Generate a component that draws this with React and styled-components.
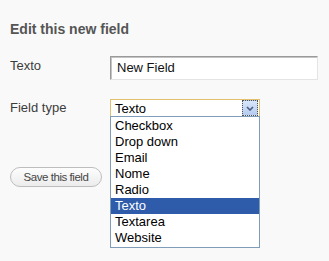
import React from "react";
import styled, { createGlobalStyle } from "styled-components";

const GlobalStyle = createGlobalStyle`
  body {
    margin: 0;
    background: #f9f9f9;
    font-family: "Liberation Sans", Arial, sans-serif;
  }
`;

const Panel = styled.div`
  padding: 21px 10px 0 10px;
  min-height: 240px;
`;

const Heading = styled.h3`
  margin: 0 0 19px 0;
  font-size: 14px;
  line-height: 16px;
  font-weight: 700;
  color: #555;
`;

const Row = styled.div`
  display: flex;
  align-items: flex-start;
  margin-bottom: 19px;
`;

const Label = styled.label`
  width: 100px;
  flex-shrink: 0;
  padding-top: ${(p) => p.$pad || 0}px;
  font-size: 13px;
  line-height: 14px;
  color: #3c3c3c;
`;

const TextInput = styled.div`
  box-sizing: border-box;
  width: 208px;
  height: 24px;
  padding: 0 6px;
  background: #fff;
  border: 1px solid;
  border-color: #9a9a9a #e4e4e4 #e4e4e4 #9a9a9a;
  box-shadow: inset 1px 1px 0 #c4c4c4;
  font-size: 13px;
  line-height: 22px;
  color: #111;
`;

const SelectWrap = styled.div`
  position: relative;
  width: 150px;
`;

const SelectBox = styled.div`
  box-sizing: border-box;
  display: flex;
  align-items: center;
  justify-content: space-between;
  height: 18px;
  padding: 0 1px 0 4px;
  background: #fff;
  border: 1px solid #e2c06c;
  font-size: 13px;
  color: #000;
`;

const ArrowButton = styled.span`
  box-sizing: border-box;
  display: flex;
  align-items: center;
  justify-content: center;
  width: 16px;
  height: 16px;
  background: linear-gradient(#d9e6fa, #b4cbf0);
  border: 1px dotted #555;
`;

const OptionList = styled.ul`
  position: absolute;
  top: 17px;
  left: 0;
  box-sizing: border-box;
  width: 150px;
  margin: 0;
  padding: 1px 0;
  list-style: none;
  background: #fff;
  border: 1px solid #7f9db9;
`;

const Option = styled.li`
  height: 16px;
  padding-left: 4px;
  font-size: 13px;
  line-height: 16px;
  color: ${(p) => (p.$selected ? "#fff" : "#000")};
  background: ${(p) => (p.$selected ? "#2e5caa" : "transparent")};
`;

const SaveButton = styled.button`
  box-sizing: border-box;
  margin-top: 31px;
  width: 92px;
  height: 20px;
  padding: 0;
  border: 1px solid #bdbdbd;
  border-radius: 11px;
  background: linear-gradient(#fdfdfd, #ececec);
  font-family: "Liberation Sans", Arial, sans-serif;
  font-size: 11.5px;
  letter-spacing: -0.45px;
  color: #464646;
`;

const options = ["Checkbox", "Drop down", "Email", "Nome", "Radio", "Texto", "Textarea", "Website"];

export default function App() {
  return (
    <Panel>
      <GlobalStyle />
      <Heading>Edit this new field</Heading>
      <Row>
        <Label $pad={3}>Texto</Label>
        <TextInput>New Field</TextInput>
      </Row>
      <Row>
        <Label $pad={2}>Field type</Label>
        <SelectWrap>
          <SelectBox>
            <span>Texto</span>
            <ArrowButton>
              <svg width="8" height="5" viewBox="0 0 8 5">
                <path d="M1 1 L4 4 L7 1" fill="none" stroke="#4a5c80" strokeWidth="1.6" />
              </svg>
            </ArrowButton>
          </SelectBox>
          <OptionList>
            {options.map((o) => (
              <Option key={o} $selected={o === "Texto"}>
                {o}
              </Option>
            ))}
          </OptionList>
        </SelectWrap>
      </Row>
      <SaveButton>Save this field</SaveButton>
    </Panel>
  );
}
